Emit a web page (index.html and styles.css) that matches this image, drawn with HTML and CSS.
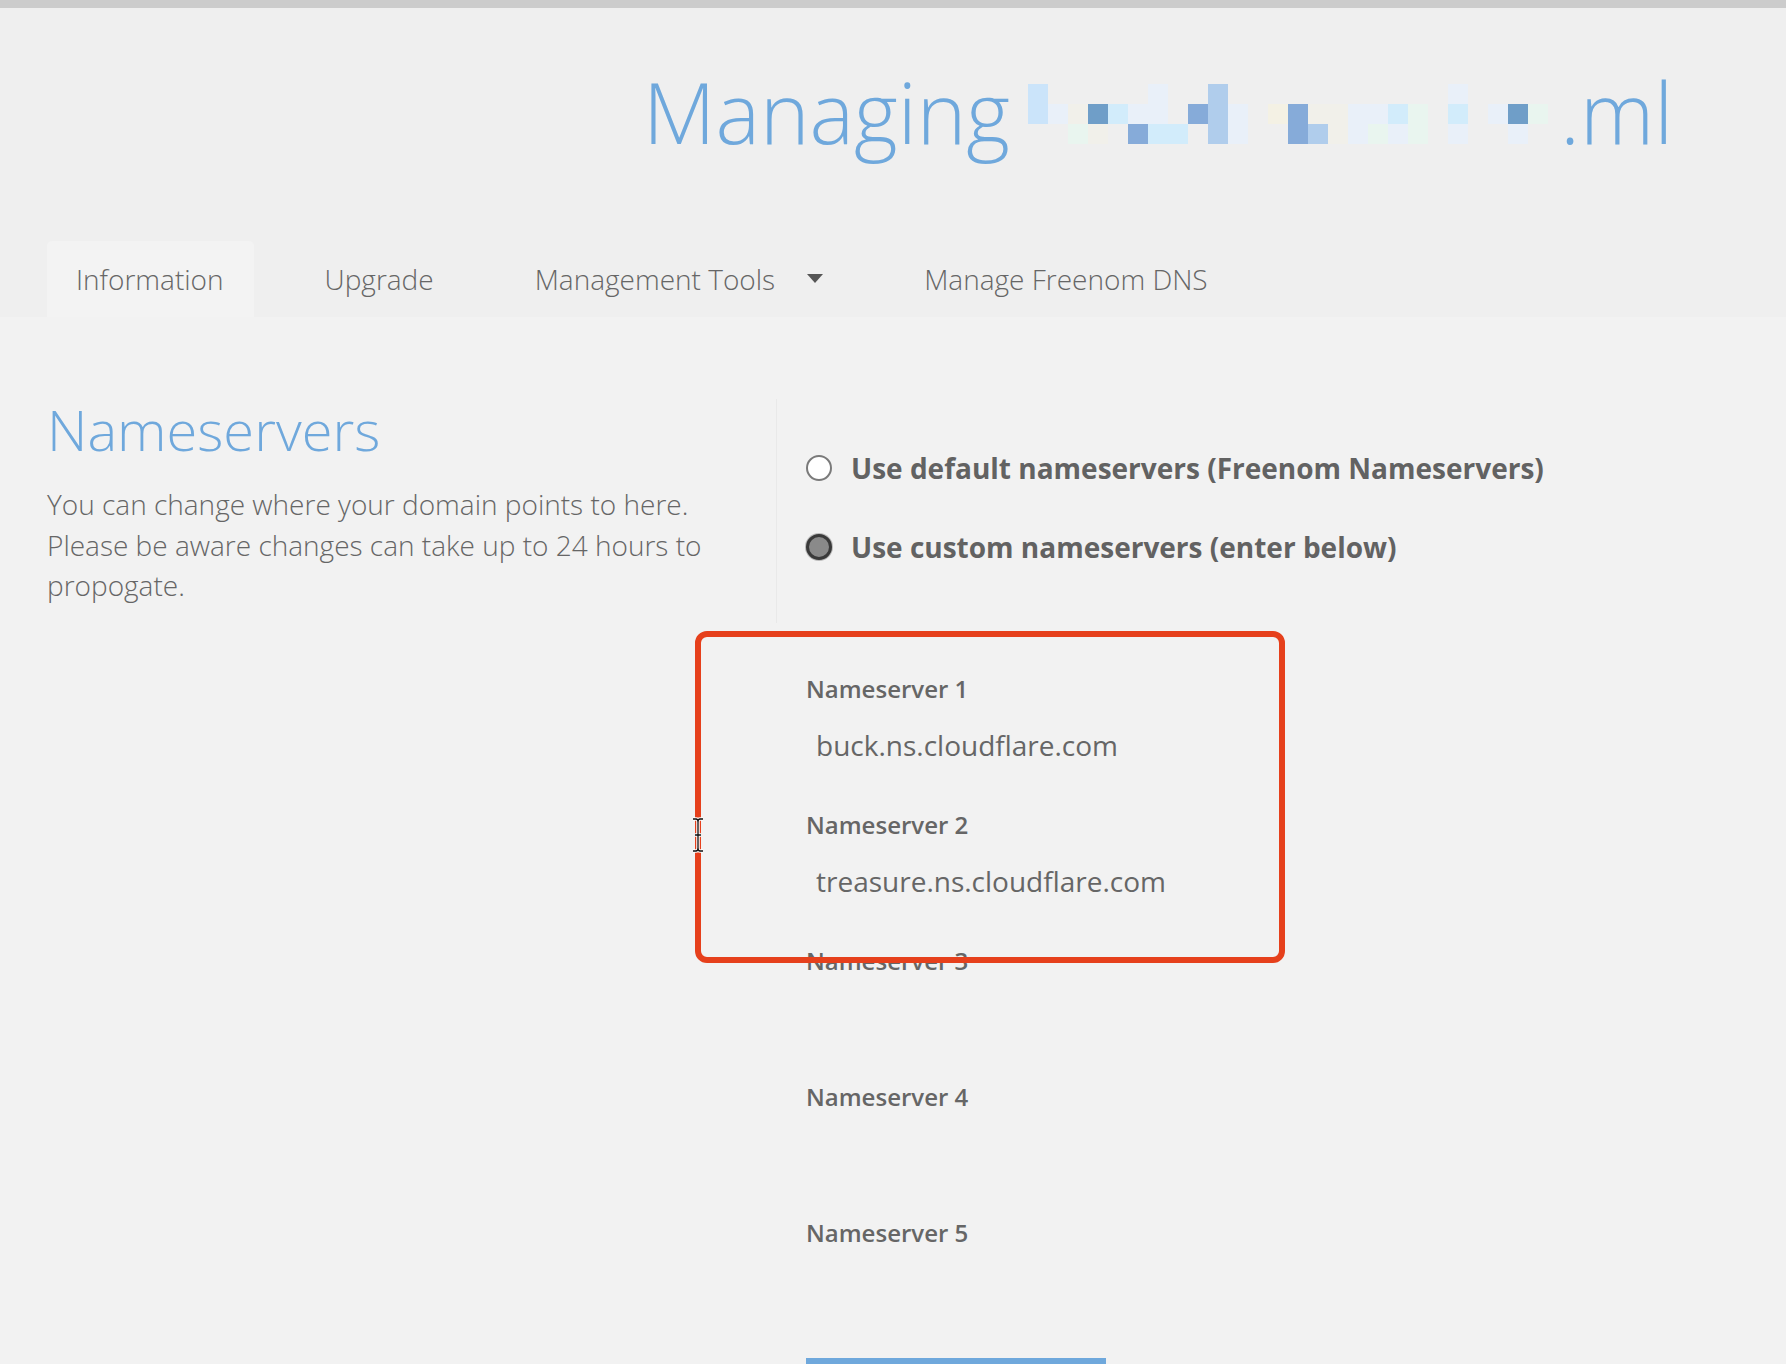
FILE: index.html
```html
<!DOCTYPE html>
<html lang="en">
<head>
<meta charset="utf-8">
<title>Managing domain</title>
<link rel="stylesheet" href="styles.css">
</head>
<body>
<div class="topbar"></div>
<header class="header">
  <h1 class="title">
    <span class="title-text">Managing</span>
    <span class="mosaic" aria-hidden="true">
      <i class="b8"></i><i></i><i></i><i></i><i></i><i></i><i class="b5"></i><i></i><i></i><i class="b3"></i><i></i><i></i><i></i><i></i><i></i><i></i><i></i><i></i><i></i><i></i><i></i><i class="b5"></i><i></i><i></i><i></i><i></i>
      <i class="b8"></i><i class="b5"></i><i class="b9"></i><i class="b1"></i><i class="b4"></i><i class="b5"></i><i class="b5"></i><i></i><i class="b2"></i><i class="b3"></i><i class="b5"></i><i></i><i class="b6"></i><i class="b2"></i><i class="b9"></i><i class="b9"></i><i class="b5"></i><i class="b5"></i><i class="b4"></i><i class="b7"></i><i></i><i class="b4"></i><i></i><i class="b5"></i><i class="b1"></i><i class="b7"></i>
      <i></i><i></i><i class="b7"></i><i class="b9"></i><i></i><i class="b2"></i><i class="b4"></i><i class="b4"></i><i></i><i class="b3"></i><i class="b5"></i><i></i><i></i><i class="b2"></i><i class="b3"></i><i class="b9"></i><i class="b5"></i><i class="b7"></i><i class="b5"></i><i class="b7"></i><i></i><i class="b5"></i><i></i><i></i><i class="b5"></i><i></i>
    </span>
    <span class="title-text">.ml</span>
  </h1>
  <nav class="tabs">
    <a class="tab active">Information</a>
    <a class="tab">Upgrade</a>
    <a class="tab">Management Tools <span class="caret"></span></a>
    <a class="tab">Manage Freenom DNS</a>
  </nav>
</header>
<main class="content">
  <section class="intro">
    <h2 class="intro-title">Nameservers</h2>
    <p class="intro-text">You can change where your domain points to here. Please be aware changes can take up to 24 hours to propogate.</p>
  </section>
  <section class="form">
    <label class="radio-row"><span class="radio"></span>Use default nameservers (Freenom Nameservers)</label>
    <label class="radio-row"><span class="radio checked"></span>Use custom nameservers (enter below)</label>
    <div class="fields">
      <div class="field"><div class="field-label">Nameserver 1</div><input class="field-input" value="buck.ns.cloudflare.com"></div>
      <div class="field"><div class="field-label">Nameserver 2</div><input class="field-input" value="treasure.ns.cloudflare.com"></div>
      <div class="field"><div class="field-label">Nameserver 3</div><input class="field-input" value=""></div>
      <div class="field"><div class="field-label">Nameserver 4</div><input class="field-input" value=""></div>
      <div class="field"><div class="field-label">Nameserver 5</div><input class="field-input" value=""></div>
    </div>
    <div class="submit"></div>
  </section>
</main>
<div class="highlight"></div>
<svg class="cursor" width="14" height="36" viewBox="0 0 14 36" aria-hidden="true">
  <path d="M2 2 H5 Q7 2 7 5 V31 Q7 34 5 34 H2 M12 2 H9 Q7 2 7 5 M7 31 Q7 34 9 34 H12 M4 18 H10" fill="none" stroke="#fff" stroke-width="3.5"/>
  <path d="M2 2 H5 Q7 2 7 5 V31 Q7 34 5 34 H2 M12 2 H9 Q7 2 7 5 M7 31 Q7 34 9 34 H12 M4 18 H10" fill="none" stroke="#111" stroke-width="1.3"/>
</svg>
</body>
</html>
```
FILE: styles.css
```css
* { box-sizing: border-box; }
html, body { margin: 0; padding: 0; }
body {
  background: #f2f2f2;
  font-family: "Open Sans", "Noto Sans", sans-serif;
  color: #666;
  width: 1786px;
  height: 1364px;
  overflow: hidden;
  position: relative;
}
.topbar { height: 8px; background: #cccccc; }
.header {
  background: #efefef;
  height: 309px;
  display: flex;
  flex-direction: column;
}
.title {
  margin: 62px 0 0 0;
  padding-left: 643px;
  display: flex;
  align-items: flex-start;
  font-weight: 300;
  font-size: 84px;
  line-height: 84px;
  color: #6fa8dc;
  white-space: nowrap;
}
.mosaic {
  display: grid;
  grid-template-columns: repeat(26, 20px);
  grid-auto-rows: 20px;
  margin: 14px 12px 0 18px;
}
.mosaic i { display: block; }
.mosaic .b1 { background: #6f9ec8; }
.mosaic .b2 { background: #86abd9; }
.mosaic .b3 { background: #b0cdec; }
.mosaic .b4 { background: #d2ecfb; }
.mosaic .b5 { background: #e9f0f9; }
.mosaic .b6 { background: #f4f1e4; }
.mosaic .b7 { background: #e9f5ef; }
.mosaic .b8 { background: #cbe4fa; }
.mosaic .b9 { background: #f1f0ea; }
.tabs {
  margin-top: auto;
  padding-left: 47px;
  display: flex;
  gap: 42px;
  height: 76px;
}
.tab {
  display: flex;
  align-items: center;
  padding: 0 30px 1px 29px;
  font-weight: 300;
  font-size: 28px;
  color: #666;
  border-radius: 5px 5px 0 0;
}
.tab.active { background: #f3f3f3; }
.caret {
  display: inline-block;
  width: 0; height: 0;
  margin-left: 32px;
  border-left: 8px solid transparent;
  border-right: 8px solid transparent;
  border-top: 9px solid #555;
}
.content {
  display: flex;
  align-items: flex-start;
}
.intro {
  width: 777px;
  margin-top: 82px;
  padding: 0 50px 17px 47px;
  border-right: 1px solid #e9e9e9;
}
.intro-title {
  margin: 0 0 24px 0;
  font-weight: 300;
  font-size: 56px;
  line-height: 60px;
  color: #6fa8dc;
}
.intro-text {
  margin: 0;
  padding-top: 1px;
  font-weight: 300;
  font-size: 28px;
  line-height: 40.5px;
  color: #666;
}
.form {
  display: flex;
  flex-direction: column;
  padding-left: 29px;
  padding-top: 131px;
}
.radio-row {
  display: flex;
  align-items: center;
  height: 40px;
  margin-bottom: 39px;
  font-weight: 700;
  font-size: 28px;
  color: #626262;
}
.radio {
  width: 26px; height: 26px;
  border-radius: 50%;
  border: 2px solid #7a7a7a;
  background: #fff;
  margin-right: 19px;
  flex: none;
}
.radio.checked {
  background: #8a8a8a;
  border: 3px solid #3a3a3a;
  box-shadow: 0 0 0 1px #bbb;
}
.fields { margin-top: 68px; }
.field { height: 136px; }
.field-label {
  height: 30px;
  line-height: 30px;
  font-weight: 600;
  font-size: 24px;
  color: #666;
}
.field-input {
  display: block;
  margin-top: 16px;
  height: 50px;
  width: 500px;
  border: none;
  background: transparent;
  padding: 0 10px;
  font-family: "Open Sans", "Noto Sans", sans-serif;
  font-size: 28px;
  color: #666;
  outline: none;
}
.submit {
  margin-top: 4px;
  width: 300px;
  height: 50px;
  background: #6fa8dc;
}
.highlight {
  position: absolute;
  left: 695px;
  top: 631px;
  width: 590px;
  height: 332px;
  border: 6px solid #e6401c;
  border-radius: 12px;
}
.cursor {
  position: absolute;
  left: 691px;
  top: 817px;
}
```
